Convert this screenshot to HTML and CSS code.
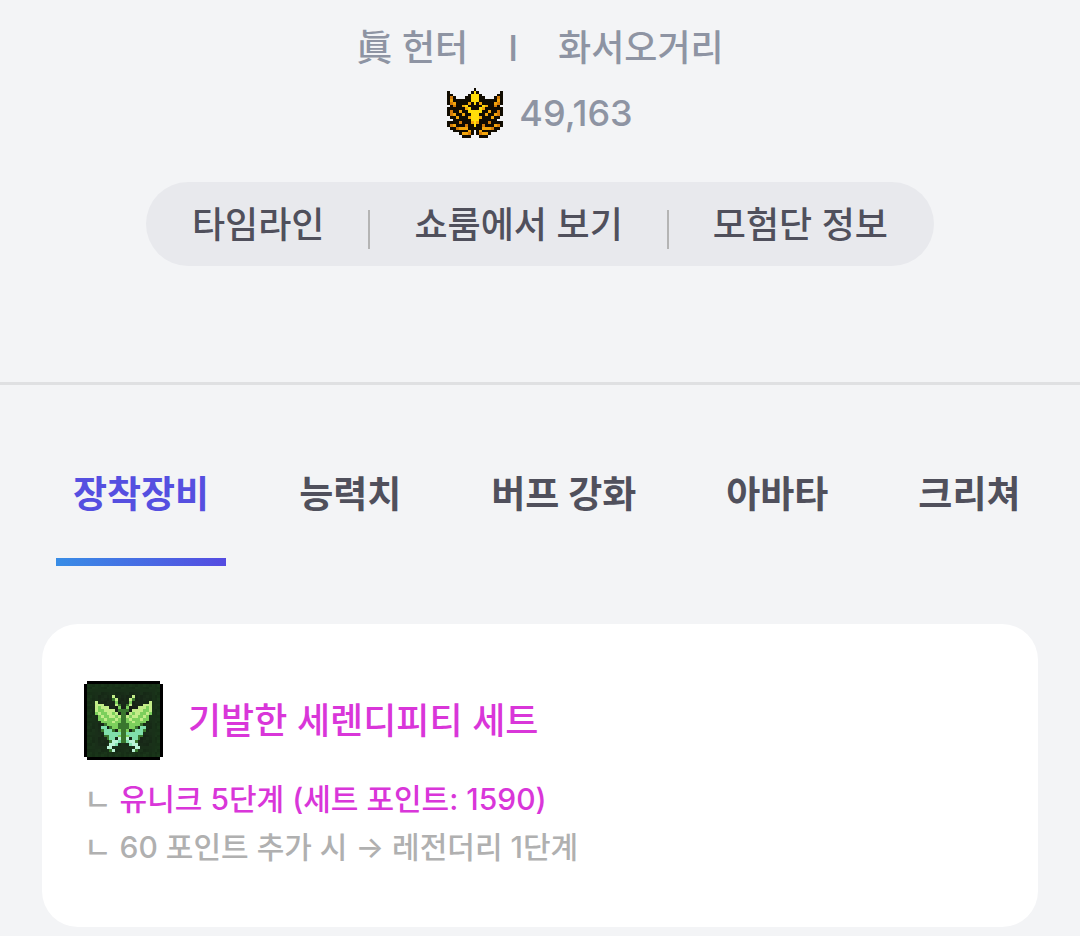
FILE: index.html
```html
<!DOCTYPE html>
<html lang="ko">
<head>
<meta charset="utf-8">
<meta name="viewport" content="width=device-width, initial-scale=1">
<title>캐릭터 정보</title>
<link rel="stylesheet" href="styles.css">
</head>
<body>
<header class="profile">
  <p class="identity"><span>眞 헌터</span><span>I</span><span>화서오거리</span></p>
  <p class="fame"><svg class="fame-icon" id="fame-icon" viewBox="0 0 19 18" preserveAspectRatio="none" shape-rendering="crispEdges" aria-hidden="true"></svg><span>49,163</span></p>
  <nav class="links">
    <a href="#timeline">타임라인</a>
    <span class="bar"></span>
    <a href="#showroom">쇼룸에서 보기</a>
    <span class="bar"></span>
    <a href="#adventure">모험단 정보</a>
  </nav>
</header>
<main>
  <div class="tabs" role="tablist">
    <button class="tab active" role="tab" aria-selected="true">장착장비</button>
    <button class="tab" role="tab">능력치</button>
    <button class="tab" role="tab">버프 강화</button>
    <button class="tab" role="tab">아바타</button>
    <button class="tab" role="tab">크리쳐</button>
  </div>
  <section class="card">
    <div class="set-head">
      <svg class="set-icon" id="set-icon" viewBox="0 0 28 28" shape-rendering="crispEdges" aria-hidden="true"></svg>
      <h2>기발한 세렌디피티 세트</h2>
    </div>
    <p class="detail"><span>ㄴ</span> <span class="unique">유니크 5단계 (세트 포인트: 1590)</span></p>
    <p class="detail"><span>ㄴ</span> 60 포인트 추가 시 → 레전더리 1단계</p>
  </section>
</main>
<script src="icons.js"></script>
</body>
</html>
```
FILE: styles.css
```css
* { box-sizing: border-box; }
body {
  margin: 0;
  background: #f3f4f6;
  color: #50505c;
  font-family: Inter, "Noto Sans CJK KR", sans-serif;
  font-size: 36px;
  font-weight: 500;
  line-height: 48px;
}
p, h2 { margin: 0; }
.profile {
  display: flex;
  flex-direction: column;
  align-items: center;
  padding: 24px 42px 116px;
  border-bottom: 3px solid #dfe0e2;
}
.identity {
  display: flex;
  gap: 40px;
  color: #8e94a3;
}
.fame {
  display: flex;
  align-items: center;
  gap: 16px;
  margin-top: 16px;
  color: #8e94a3;
}
.fame-icon { width: 56px; height: 50px; }
.links {
  display: flex;
  align-items: flex-end;
  gap: 44px;
  margin-top: 44px;
  padding: 19px 46px 17px;
  border-radius: 42px;
  background: #e8e9ed;
}
.links a { color: inherit; text-decoration: none; white-space: nowrap; }
.bar { width: 2px; height: 39px; background: #b4b4b4; }
main { padding: 86px 42px 9px; }
.tabs {
  display: flex;
  gap: 56px;
  padding: 0 14px;
}
.tab {
  flex: none;
  padding: 0 17px 39px;
  border: 0;
  border-bottom: 8px solid transparent;
  background: none;
  color: inherit;
  font: inherit;
  font-size: 37px;
  font-weight: 700;
}
.active {
  border-image: linear-gradient(90deg, #388de6, #554be1) 1;
  color: #554fe0;
}
.card {
  margin-top: 58px;
  padding: 57px 42px 56px;
  border-radius: 36px;
  background: #fff;
}
.set-head {
  display: flex;
  align-items: center;
  gap: 25px;
  margin-bottom: 15px;
}
.set-icon { width: 79px; height: 79px; }
h2, .unique { color: #d936d9; font-weight: 500; }
h2 { font-size: 36px; }
.detail { color: #b0b0b0; font-size: 30px; }
```
FILE: icons.js
```js
const SVG = "http://www.w3.org/2000/svg";

function cell(svg, x, y, w, h, fill) {
  const rect = document.createElementNS(SVG, "rect");
  Object.entries({ x, y, width: w, height: h, fill }).forEach(([k, v]) => rect.setAttribute(k, v));
  svg.append(rect);
}

// Each row holds the left half; the right half mirrors it.
function drawMirrored(svg, rows, top, width, colors) {
  rows.forEach((row, y) => {
    [...row].forEach((key, x) => {
      if (!colors[key]) return;
      cell(svg, x, y + top, 1, 1, colors[key]);
      cell(svg, width - 1 - x, y + top, 1, 1, colors[key]);
    });
  });
}

drawMirrored(document.getElementById("fame-icon"), [
  ".........K",
  "K.......KY",
  "KK.....KYY",
  "KOK...KKYY",
  "KoKKKKKKYY",
  "KOoKKKKoKY",
  ".KOKKoYKKK",
  "KKKKKKoYKK",
  "KOKKoKKYYY",
  "KOoKKoKKYY",
  ".KKoKKKoYY",
  "..KKKKKKYY",
  "KKKKOKKKoY",
  "KOoKKKOKKY",
  ".KKOoooKKK",
  "..KKKKKoK.",
  "....KooOK.",
  ".....KKK.."
], 0, 19, { K: "#110c02", O: "#d57c0a", o: "#f3a60b", Y: "#ffdd09" });

const setIcon = document.getElementById("set-icon");
cell(setIcon, 1, 0, 26, 28, "#000");
cell(setIcon, 0, 1, 28, 26, "#000");
for (let y = 1; y < 27; y++) {
  for (let x = 1; x < 27; x++) {
    const edge = Math.max(Math.abs(x - 13.5), Math.abs(y - 13.5));
    const tint = (x * 7 + y * 11 + x * y) % 5;
    cell(setIcon, x, y, 1, 1, `rgb(${22 + tint}, ${22 + edge * 2 + tint * 2}, ${22 + tint})`);
  }
}
drawMirrored(setIcon, [
  "..........y...",
  "..........dy..",
  "....y......g..",
  "....yyy....yd.",
  "....ygyyy...g.",
  "....yggyyyy.dd",
  "....gyggyygy.d",
  ".....gyggyygyd",
  ".....ggygggygd",
  "......ggggyggd",
  ".......dggggdd",
  "......tt.dggdd",
  "......dtttd.gd",
  ".......ttttttd",
  ".......ddtttgd",
  "........dtt.wd",
  ".........dwwtd",
  ".........wwt..",
  "........ww....",
  ".........dw..."
], 5, 28, { y: "#c2ec88", g: "#7ccf5c", d: "#39762e", t: "#80dfac", w: "#b9f2d6" });
```
